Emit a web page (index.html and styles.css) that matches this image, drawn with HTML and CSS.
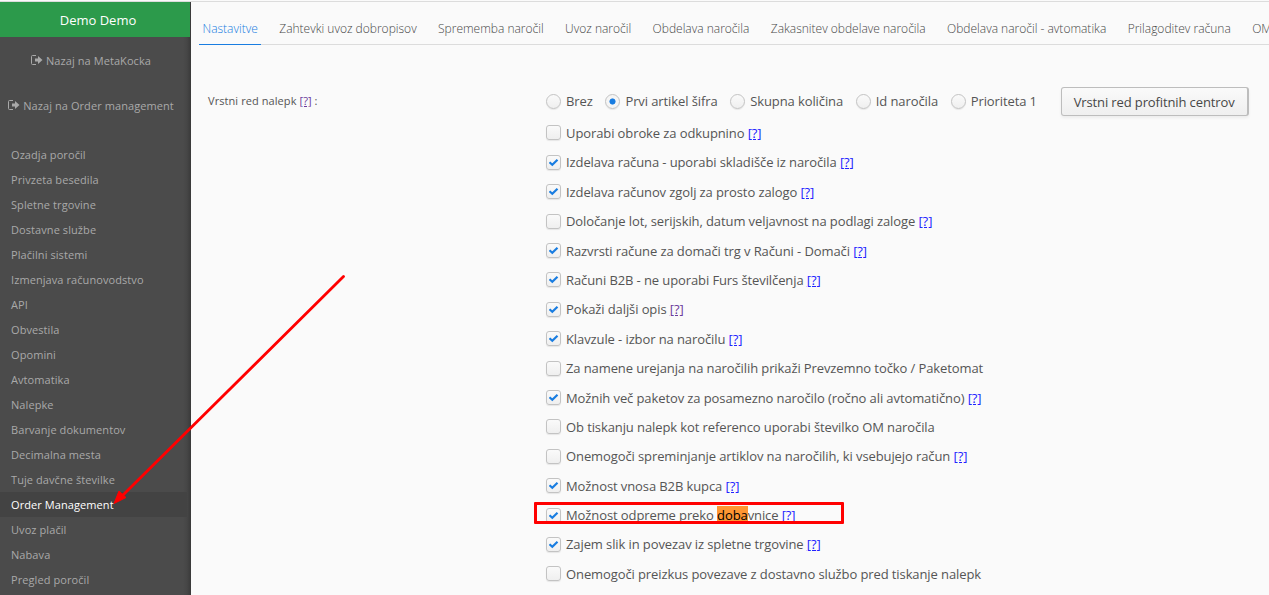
FILE: index.html
```
<!DOCTYPE html>
<html lang="sl">
<head>
  <meta charset="UTF-8">
  <meta name="viewport" content="width=device-width, initial-scale=1.0">
  <title>Nastavitve - Order Management</title>
  <link rel="stylesheet" href="styles.css">
</head>
<body>
  <svg class="icons" width="0" height="0">
    <symbol id="exit" viewBox="0 0 12 10">
      <path d="M5 .5H1.500Q.5.5.5 1.500v7q0 1 1 1H5" fill="none" stroke="currentColor"/>
      <path d="M4 3.500h3V1l4.500 4L7 9V6.500H4z" fill="currentColor"/>
    </symbol>
  </svg>
  <div class="page">
    <div class="sidebar">
      <div class="company">Demo Demo</div>
      <a class="back"><svg class="exit"><use href="#exit"/></svg>Nazaj na MetaKocka</a>
      <a class="back"><svg class="exit"><use href="#exit"/></svg>Nazaj na Order management</a>
      <ul class="menu">
        <li>Ozadja poročil</li>
        <li>Privzeta besedila</li>
        <li>Spletne trgovine</li>
        <li>Dostavne službe</li>
        <li>Plačilni sistemi</li>
        <li>Izmenjava računovodstvo</li>
        <li>API</li>
        <li>Obvestila</li>
        <li>Opomini</li>
        <li>Avtomatika</li>
        <li>Nalepke</li>
        <li>Barvanje dokumentov</li>
        <li>Decimalna mesta</li>
        <li>Tuje davčne številke</li>
        <li class="active">Order Management</li>
        <li>Uvoz plačil</li>
        <li>Nabava</li>
        <li>Pregled poročil</li>
      </ul>
    </div>

    <div class="content">
      <div class="tabs">
        <div class="tab selected">Nastavitve</div>
        <div class="tab">Zahtevki uvoz dobropisov</div>
        <div class="tab">Sprememba naročil</div>
        <div class="tab">Uvoz naročil</div>
        <div class="tab">Obdelava naročila</div>
        <div class="tab">Zakasnitev obdelave naročila</div>
        <div class="tab">Obdelava naročil - avtomatika</div>
        <div class="tab">Prilagoditev računa</div>
        <div class="tab">OM</div>
      </div>

      <div class="form">
        <div class="label">Vrstni red nalepk <a class="help visited">[?]</a> :</div>
        <div class="fields">
          <div class="radios">
            <label><input type="radio" name="order">Brez</label>
            <label><input type="radio" name="order" checked>Prvi artikel šifra</label>
            <label><input type="radio" name="order">Skupna količina</label>
            <label><input type="radio" name="order">Id naročila</label>
            <label><input type="radio" name="order">Prioriteta 1</label>
            <button class="button">Vrstni red profitnih centrov</button>
          </div>
          <div class="checks">
            <label><input type="checkbox"><span>Uporabi obroke za odkupnino <a class="help">[?]</a></span></label>
            <label><input type="checkbox" checked><span>Izdelava računa - uporabi skladišče iz naročila <a class="help">[?]</a></span></label>
            <label><input type="checkbox" checked><span>Izdelava računov zgolj za prosto zalogo <a class="help">[?]</a></span></label>
            <label><input type="checkbox"><span>Določanje lot, serijskih, datum veljavnost na podlagi zaloge <a class="help">[?]</a></span></label>
            <label><input type="checkbox" checked><span>Razvrsti račune za domači trg v Računi - Domači <a class="help">[?]</a></span></label>
            <label><input type="checkbox" checked><span>Računi B2B - ne uporabi Furs številčenja <a class="help">[?]</a></span></label>
            <label><input type="checkbox" checked><span>Pokaži daljši opis <a class="help visited">[?]</a></span></label>
            <label><input type="checkbox" checked><span>Klavzule - izbor na naročilu <a class="help">[?]</a></span></label>
            <label><input type="checkbox"><span>Za namene urejanja na naročilih prikaži Prevzemno točko / Paketomat</span></label>
            <label><input type="checkbox" checked><span>Možnih več paketov za posamezno naročilo (ročno ali avtomatično) <a class="help">[?]</a></span></label>
            <label><input type="checkbox"><span>Ob tiskanju nalepk kot referenco uporabi številko OM naročila</span></label>
            <label><input type="checkbox"><span>Onemogoči spreminjanje artiklov na naročilih, ki vsebujejo račun <a class="help">[?]</a></span></label>
            <label><input type="checkbox" checked><span>Možnost vnosa B2B kupca <a class="help">[?]</a></span></label>
            <label class="marked"><input type="checkbox" checked><span>Možnost odpreme preko <mark>doba</mark>vnice <a class="help">[?]</a></span></label>
            <label><input type="checkbox" checked><span>Zajem slik in povezav iz spletne trgovine <a class="help">[?]</a></span></label>
            <label><input type="checkbox"><span>Onemogoči preizkus povezave z dostavno službo pred tiskanje nalepk</span></label>
          </div>
        </div>
      </div>
    </div>
  </div>

  <svg class="arrow" width="360" height="520">
    <path d="M343.500 276.500L122 496" stroke="#f00" stroke-width="2.800" stroke-linecap="round"/>
    <path d="M114 503.500l5-12.500 7 6.500z" fill="#f00" stroke="#f00"/>
  </svg>
</body>
</html>
```
FILE: styles.css
```
* {
  box-sizing: border-box;
}
body {
  margin: 0;
  height: 595px;
  overflow: hidden;
  background-color: #fafafa;
  font-family: "Open Sans", sans-serif;
  font-size: 13px;
  color: #555;
}
.icons {
  position: absolute;
}
.page {
  display: flex;
  height: 595px;
  border-top: 1px solid #fafafa;
  box-shadow: inset 0 1px #dcdcdc;
  padding-top: 1px;
}

/* sidebar */
.sidebar {
  flex: none;
  width: 191px;
  background: linear-gradient(to right, #4b4b4b 183px, #464646 187px, #393939 191px);
  color: #a9a9a9;
  font-size: 11px;
  letter-spacing: 0.08px;
}
.company {
  height: 35px;
  line-height: 36px;
  margin-right: 1px;
  padding-left: 6px;
  background-color: #2c9a4b;
  color: #fff;
  font-size: 13px;
  letter-spacing: 0;
  text-align: center;
}
.back {
  display: flex;
  align-items: center;
  justify-content: center;
  height: 45px;
  padding: 1px 9px 0 0;
  white-space: nowrap;
}
.exit {
  width: 12px;
  height: 10px;
  margin-right: 3px;
}
.menu {
  list-style: none;
  margin: 0;
  padding: 15px 0 0;
}
.menu li {
  height: 25px;
  line-height: 26px;
  padding-left: 11px;
}
.menu .active {
  margin-right: 4px;
  background-color: #434343;
  color: #fff;
}

/* tabs */
.content {
  flex: 1;
  min-width: 0;
  padding-left: 8px;
  overflow: hidden;
}
.tabs {
  display: flex;
  gap: 14.400px;
  height: 43px;
  padding-top: 12px;
  box-shadow: inset 0 -1px #dcdcdc;
}
.tab {
  flex: none;
  padding: 0 3.500px;
  line-height: 30px;
  font-size: 12px;
  font-weight: 300;
  color: #474747;
}
.selected {
  color: #197de1;
  border-bottom: 1px solid #197de1;
}

/* form */
.form {
  display: flex;
  padding: 41px 0 0 9px;
}
.label {
  width: 338px;
  line-height: 30px;
  font-size: 11px;
  letter-spacing: 0.08px;
}
.fields {
  letter-spacing: -0.1px;
}
.radios {
  display: flex;
  align-items: center;
  height: 30px;
}
.radios label {
  display: flex;
  align-items: center;
  margin-right: 12.700px;
  white-space: nowrap;
}
input {
  appearance: none;
  flex: none;
  width: 15px;
  height: 15px;
  margin: 0 5px 0 0;
  border: 1px solid #c3c3c3;
  border-radius: 3px;
  background: linear-gradient(#fafafa, #efefef);
  box-shadow: 0 1px 1px rgba(0, 0, 0, 0.08);
}
input[type="radio"] {
  border-radius: 50%;
}
input[type="radio"]:checked {
  background: radial-gradient(circle, #197de1 2.700px, #f5f5f5 3.400px);
}
input[type="checkbox"]:checked {
  background: url("data:image/svg+xml,%3Csvg xmlns='http://www.w3.org/2000/svg' width='13' height='13'%3E%3Cpath d='M2.500 6.300L5.300 8.800L10.500 3.800' fill='none' stroke='%23197de1' stroke-width='2.200'/%3E%3C/svg%3E"), linear-gradient(#fafafa, #efefef);
}
.button {
  width: 188px;
  height: 29px;
  margin-left: 11px;
  padding: 2px 0 0;
  border: 1px solid #bdbdbd;
  border-right-width: 2px;
  border-radius: 3px;
  background: linear-gradient(#fafafa, #efefef);
  box-shadow: 0 2px 3px rgba(0, 0, 0, 0.06);
  font-family: inherit;
  font-size: 13px;
  letter-spacing: -0.12px;
  color: #474747;
  white-space: nowrap;
}
.checks {
  padding-top: 2.300px;
}
.checks label {
  display: flex;
  align-items: center;
  position: relative;
  height: 29.400px;
  white-space: nowrap;
}
.help {
  color: #22f;
  text-decoration: underline;
}
.visited {
  color: #6b3a9a;
}
mark {
  background-color: #ff9632;
  color: #000;
}
.marked::after {
  content: "";
  position: absolute;
  box-sizing: border-box;
  left: -12px;
  top: 2px;
  width: 310px;
  height: 22px;
  border: 3px solid #f00;
  border-radius: 1px;
}

.arrow {
  position: absolute;
  left: 0;
  top: 0;
}
```
